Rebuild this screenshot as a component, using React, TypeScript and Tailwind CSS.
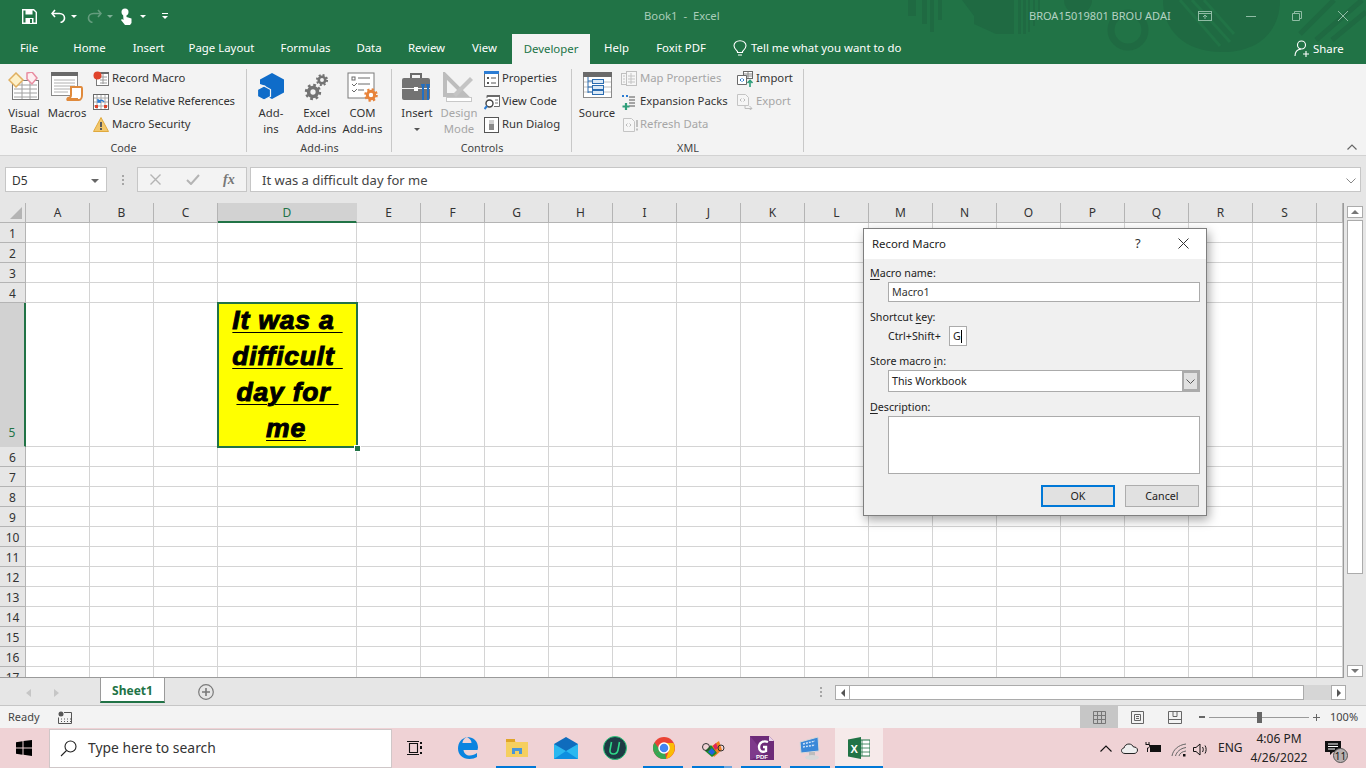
import React from "react";

const colLetters = ["A","B","C","D","E","F","G","H","I","J","K","L","M","N","O","P","Q","R","S","T"];
const rowNums = [1,2,3,4,5,6,7,8,9,10,11,12,13,14,15,16,17];

function Gear({ cx, cy, r, color }: { cx: number; cy: number; r: number; color: string }) {
  const c = 2 * Math.PI * r * 1.05;
  return (
    <g fill="none" stroke={color}>
      <circle cx={cx} cy={cy} r={r * 0.68} strokeWidth={r * 0.55} />
      <circle cx={cx} cy={cy} r={r * 1.05} strokeWidth={r * 0.42} strokeDasharray={`${c / 16} ${c / 16}`} />
    </g>
  );
}

const Svg = ({ w, h, children, className = "" }: { w: number; h: number; children: React.ReactNode; className?: string }) => (
  <svg width={w} height={h} viewBox={`0 0 ${w} ${h}`} className={`shrink-0 ${className}`}>{children}</svg>
);

function VisualBasicIcon() {
  return (
    <Svg w={32} h={28}>
      <rect x="4.5" y="8.5" width="26" height="19" fill="#fff" stroke="#7a7a7a" />
      <path d="M6 13h23M6 17h23M6 21h23M6 25h23M14 10v17M22 10v17" stroke="#a0a0a0" />
      <path d="M8 1l7 7-7 7-7-7z" fill="#fdf0c8" stroke="#e0b060" strokeWidth="1.5" />
      <path d="M19 1l5-1 5 6-5 6-5-5z" fill="#fdeef0" stroke="#e88ca0" strokeWidth="1.5" />
    </Svg>
  );
}
function MacrosIcon() {
  return (
    <Svg w={32} h={29}>
      <rect x="0.5" y="0.5" width="26" height="23" fill="#fff" stroke="#8a8a8a" />
      <rect x="0" y="0" width="27" height="4" fill="#6a6a6a" />
      <path d="M3 8h21M3 11h21M3 14h21M3 17h21M3 20h14" stroke="#b0b0b0" />
      <path d="M20 15h10c1 0 1 1 1 2v6c0 2-1 5-3 5H17c-1 0-1-1 0-2 2 0 3-1 3-3z" fill="#fff" stroke="#e08a3c" strokeWidth="2" />
      <rect x="16" y="26" width="11" height="3" fill="#e08a3c" />
    </Svg>
  );
}
function RecordIcon() {
  return (
    <Svg w={16} h={16}>
      <rect x="3.5" y="1.5" width="12" height="13" fill="#fff" stroke="#7a7a7a" />
      <path d="M7 6h7M7 9h7M7 12h7M10 3v10" stroke="#9a9a9a" />
      <rect x="8" y="1" width="8" height="2" fill="#6a6a6a" />
      <circle cx="4.5" cy="4.5" r="4" fill="#e0432b" />
    </Svg>
  );
}
function RelativeIcon() {
  return (
    <Svg w={16} h={16}>
      <rect x="0.5" y="0.5" width="15" height="15" fill="#fff" stroke="#6a6a6a" />
      <path d="M1 4h14M1 8h14M1 12h14M4 1v14M8 1v14M12 1v14" stroke="#a8a8a8" />
      <rect x="2" y="11" width="3" height="3" fill="#e0432b" />
      <rect x="11" y="11" width="3" height="3" fill="#e0432b" />
      <path d="M11 8a3.5 3.5 0 0 0-6 0M5 5v3h3" fill="none" stroke="#2b7cd3" strokeWidth="1.4" />
    </Svg>
  );
}
function SecurityIcon() {
  return (
    <Svg w={16} h={15}>
      <path d="M8 0.5l7.5 14H0.5z" fill="#f2c76c" stroke="#e0a93c" />
      <rect x="7" y="5" width="2" height="5" fill="#5a5a5a" />
      <rect x="7" y="11" width="2" height="2" fill="#5a5a5a" />
    </Svg>
  );
}
function AddinsIcon() {
  return (
    <Svg w={28} h={28}>
      <path d="M15 1l12 6.5v13L15 27 9 24V14L3 12V7.5z" fill="#0f6cc9" />
      <path d="M7 14l6.5 3.5v7L7 28 .5 24.5v-7z" fill="#0f6cc9" stroke="#f3f3f3" strokeWidth="1.2" />
    </Svg>
  );
}
function ExcelAddinsIcon() {
  return (
    <Svg w={28} h={30}>
      <Gear cx={19} cy={8} r={4.8} color="#737373" />
      <Gear cx={10} cy={20} r={6.5} color="#737373" />
    </Svg>
  );
}
function ComIcon() {
  return (
    <Svg w={32} h={30}>
      <rect x="1" y="1" width="26" height="25" fill="#fff" stroke="#7a7a7a" strokeWidth="1" />
      <rect x="5" y="5" width="3" height="3" fill="none" stroke="#6a6a6a" />
      <path d="M11 6h12M5 12l2 2 3-3M11 12h12M5 18l2 2 3-3M11 18h6" stroke="#6a6a6a" fill="none" />
      <Gear cx={24} cy={23} r={5.4} color="#e8833a" />
    </Svg>
  );
}
function InsertIcon() {
  return (
    <Svg w={30} h={32}>
      <path d="M9 6V2h10v4" fill="none" stroke="#6a6a6a" strokeWidth="2" />
      <rect x="0" y="6" width="28" height="22" rx="2" fill="#737373" />
      <rect x="0" y="16" width="28" height="1" fill="#f3f3f3" />
      <rect x="12" y="15" width="4" height="4" fill="#fff" />
      <path d="M20 14h2v14h-2zM25 14h2v14h-2z" fill="#1f6fc4" />
      <path d="M19 12l1 4h2l1-4zM24 12l1 4h2l1-4z" fill="#1f6fc4" />
    </Svg>
  );
}
function DesignIcon() {
  return (
    <Svg w={32} h={30}>
      <path d="M2 3v20h20z" fill="none" stroke="#bdbdbd" strokeWidth="4" />
      <path d="M10 22l17-17 3 3-17 17z" fill="#c4c4c4" />
      <rect x="3.5" y="25.5" width="25" height="4" fill="#fff" stroke="#c8c8c8" />
    </Svg>
  );
}
function PropertiesIcon() {
  return (
    <Svg w={15} h={16}>
      <rect x="0.5" y="0.5" width="14" height="15" fill="#fff" stroke="#6a6a6a" />
      <rect x="0" y="0" width="15" height="3" fill="#2b7cd3" />
      <rect x="3" y="6" width="2" height="2" fill="#555" />
      <rect x="3" y="11" width="2" height="2" fill="#555" />
      <path d="M7 7h5M7 12h5" stroke="#555" />
    </Svg>
  );
}
function ViewCodeIcon() {
  return (
    <Svg w={16} h={16}>
      <path d="M3 4V1.5h12.5v11H10" fill="#fff" stroke="#6a6a6a" />
      <rect x="3" y="1" width="13" height="2" fill="#6a6a6a" />
      <path d="M11 6h3M11 9h3" stroke="#777" />
      <circle cx="5.5" cy="9.5" r="3.5" fill="#fff" stroke="#444" strokeWidth="1.4" />
      <path d="M3 12l-2.5 3" stroke="#2b7cd3" strokeWidth="2" />
    </Svg>
  );
}
function RunDialogIcon() {
  return (
    <Svg w={15} h={16}>
      <rect x="0.5" y="0.5" width="14" height="15" fill="#fff" stroke="#555" strokeWidth="1" />
      <rect x="5" y="3" width="5" height="10" fill="#8a8a8a" />
      <rect x="5" y="3" width="5" height="4" fill="#d0d0d0" />
    </Svg>
  );
}
function SourceIcon() {
  return (
    <Svg w={29} h={26}>
      <rect x="0.5" y="0.5" width="28" height="25" fill="#fff" stroke="#8a8a8a" />
      <rect x="0" y="0" width="29" height="5" fill="#6a6a6a" />
      <path d="M1 10h27M1 15h27M1 20h27" stroke="#c0c0c0" />
      <path d="M5 5v16M5 9h4M5 15h4M5 20h4" stroke="#2b6cb0" fill="none" />
      <rect x="9.5" y="7.5" width="11" height="4" fill="#dbe9f6" stroke="#2b6cb0" />
      <rect x="9.5" y="13.5" width="11" height="4" fill="#dbe9f6" stroke="#2b6cb0" />
      <rect x="9.5" y="18.5" width="11" height="4" fill="#dbe9f6" stroke="#2b6cb0" />
    </Svg>
  );
}
function MapPropsIcon() {
  return (
    <Svg w={16} h={15}>
      <rect x="5.5" y="0.5" width="10" height="14" fill="#f6f6f6" stroke="#c0c0c0" />
      <rect x="0.5" y="2.5" width="5" height="11" fill="#f6f6f6" stroke="#c0c0c0" />
      <path d="M7 5h7M7 8h7M7 11h7M2 5h2M2 8h2M2 11h2M10 2v11" stroke="#c4c4c4" />
    </Svg>
  );
}
function ExpansionIcon() {
  return (
    <Svg w={16} h={16}>
      <path d="M8 3h6M8 6h6M8 9h6M8 12h6" stroke="#555" />
      <path d="M1 2h2M5 2h2" stroke="#2b7cd3" strokeWidth="2" />
      <path d="M5 9v7M1.500 12.500h7" stroke="#2e9e7a" strokeWidth="2.2" />
    </Svg>
  );
}
function RefreshIcon() {
  return (
    <Svg w={15} h={14} className="ml-[2px]">
      <path d="M0.500 0.500h8l3 3v10h-11z" fill="#f6f6f6" stroke="#c4c4c4" />
      <path d="M3 7l1.500-1.500M3 7l1.500 1.500M8 7L6.500 5.500M8 7L6.500 8.500" stroke="#bbb" />
      <rect x="13" y="2" width="2" height="7" fill="#c0c0c0" />
      <rect x="13" y="10.500" width="2" height="2" fill="#c0c0c0" />
    </Svg>
  );
}
function ImportIcon() {
  return (
    <Svg w={16} h={16}>
      <rect x="6.500" y="0.500" width="9" height="7" fill="#fff" stroke="#6a6a6a" />
      <path d="M7 3h8M7 5h8M11 1v6" stroke="#8a8a8a" />
      <path d="M0.500 4.500h9v9h-9z" fill="#fff" stroke="#6a6a6a" />
      <path d="M3 9l1.500-1.500M3 9l1.500 1.500M7 9L5.500 7.500M7 9l-1.500 1.500" stroke="#2b7cd3" />
      <path d="M13 16v-6M10.500 12l2.500-2.500 2.500 2.500" stroke="#2e9e7a" fill="none" strokeWidth="1.600" />
    </Svg>
  );
}
function ExportIcon() {
  return (
    <Svg w={16} h={16}>
      <path d="M0.500 0.500h8l3 3v8h-11z" fill="#f6f6f6" stroke="#c4c4c4" />
      <path d="M3 6l1.500-1.500M3 6l1.500 1.500M8 6L6.500 4.500M8 6L6.500 7.500" stroke="#bbb" />
      <path d="M8 12v2.500h7M12.500 12l2.500 2.500-2.500 1.500" stroke="#bdbdbd" fill="none" />
    </Svg>
  );
}

function BigBtn({ w, icon, lines, disabled }: { w: number; icon: React.ReactNode; lines: string[]; disabled?: boolean }) {
  return (
    <div className={`flex flex-col items-center ${disabled ? "text-[#a6a6a6]" : "text-[#333]"}`} style={{ width: w }}>
      <div className="flex h-[36px] items-start justify-center pt-[3px]">{icon}</div>
      <div className="text-center text-[11.3px] leading-[16px]">
        {lines.map((l) => (<div key={l} className="whitespace-nowrap">{l}</div>))}
      </div>
    </div>
  );
}

function SmallBtn({ icon, label, disabled, textW = 19, tight }: { icon: React.ReactNode; label: string; disabled?: boolean; textW?: number; tight?: boolean }) {
  return (
    <div className={`flex h-[23px] items-center text-[11.3px] whitespace-nowrap ${disabled ? "text-[#a6a6a6]" : "text-[#333]"} ${tight ? "tracking-[-0.15px]" : ""}`}>
      <div className="flex items-center justify-start" style={{ width: textW }}>{icon}</div>
      <span>{label}</span>
    </div>
  );
}

function Group({ width, label, children }: { width: number; label: string; children: React.ReactNode }) {
  return (
    <div className="relative flex h-[87px] shrink-0 flex-col" style={{ width }}>
      <div className="flex h-[72px] items-start">{children}</div>
      <div className="text-center text-[10.8px] leading-[14px] text-[#444]">{label}</div>
      <div className="absolute right-0 top-0 h-[83px] w-px bg-[#c8c8c8]" />
    </div>
  );
}

function TitleDecor() {
  const c = "#1f6a42";
  return (
    <svg width="466" height="54" viewBox="0 0 466 54" className="absolute right-0 top-0" fill={c}>
      <rect x="8" y="0" width="8" height="16" />
      <rect x="22" y="0" width="5" height="24" />
      <rect x="30" y="0" width="4" height="32" />
      <rect x="38" y="0" width="4" height="20" />
      <path d="M62 0l12 16V0zM74 0h40v34H96L74 24z" />
      <path d="M100 0h2v34h-2zM118 0h3v34h-3zM123 0h3v34h-3zM128 0h2v32h-2zM133 0h2v26h-2zM138 0h2v18h-2z" />
      <circle cx="178" cy="0" r="14" />
      <circle cx="228" cy="30" r="17" fill="none" stroke={c} strokeWidth="7" />
      <path d="M263 0h117c0 30-20 52-58 52s-59-22-59-52z" />
      <path d="M280 0l40 46M292 0l38 42M304 0l30 34" stroke="#217346" strokeWidth="3" fill="none" />
      <path d="M400 34L434 0M416 40L462 0M432 40L466 12" stroke={c} strokeWidth="5" fill="none" />
    </svg>
  );
}

function TitleBar() {
  return (
    <div className="relative z-10 flex h-[32px] items-center">
      <div className="relative flex w-full items-center text-white">
        <div className="ml-[22px]">
          <Svg w={15} h={15}>
            <path d="M0.700 0.700h11l2.600 2.600v11H.7z" fill="none" stroke="#fff" strokeWidth="1.400" />
            <rect x="3.500" y="1" width="7" height="4.500" fill="#fff" />
            <rect x="3.500" y="9" width="8" height="5.500" fill="#fff" />
            <rect x="8" y="10" width="2" height="4" fill="#217346" />
          </Svg>
        </div>
        <div className="ml-[14px]">
          <Svg w={15} h={14}>
            <path d="M4 1L1 4.500 4 8" fill="none" stroke="#fff" strokeWidth="1.600" />
            <path d="M1.500 4.500h7c3 0 5 2 5 4.500s-2 4-4 4.500" fill="none" stroke="#fff" strokeWidth="1.600" />
          </Svg>
        </div>
        <div className="ml-[5px] h-0 w-0 border-x-[3px] border-t-[3px] border-x-transparent border-t-white" />
        <div className="ml-[10px] opacity-30">
          <Svg w={15} h={14}>
            <path d="M11 1l3 3.500L11 8" fill="none" stroke="#fff" strokeWidth="1.600" />
            <path d="M13.500 4.500h-7c-3 0-5 2-5 4.500s2 4 4 4.500" fill="none" stroke="#fff" strokeWidth="1.600" />
          </Svg>
        </div>
        <div className="ml-[5px] h-0 w-0 border-x-[3px] border-t-[3px] border-x-transparent border-t-[#7fb096]" />
        <div className="ml-[7px]">
          <Svg w={13} h={17}>
            <circle cx="5" cy="4" r="3.500" fill="#fff" />
            <path d="M3 5h3.500v4l5 1.500V15l-1.500 2H5l-4-5 1-1 1.500 1z" fill="#fff" />
          </Svg>
        </div>
        <div className="ml-[7px] h-0 w-0 border-x-[3px] border-t-[3px] border-x-transparent border-t-white" />
        <div className="ml-[16px] flex flex-col items-center gap-[2px]">
          <div className="h-px w-[6px] bg-white" />
          <div className="h-0 w-0 border-x-[3px] border-t-[3px] border-x-transparent border-t-white" />
        </div>
        <div className="absolute left-[644px] top-[-1px] whitespace-pre text-[11.3px] leading-[18px] text-[#a9cdb9]">Book1  -  Excel</div>
        <div className="absolute left-[1029px] top-[-1px] whitespace-nowrap text-[11px] leading-[18px] text-[#b4d2c2]">BROA15019801 BROU ADAI</div>
        <div className="absolute left-[1198px] top-[3px]">
          <Svg w={14} h={10}>
            <rect x="0.500" y="0.500" width="13" height="9" fill="none" stroke="#8fbca4" />
            <path d="M1 2.500h12M7 8V4M5 6l2-2 2 2" stroke="#8fbca4" fill="none" />
          </Svg>
        </div>
        <div className="absolute left-[1246px] top-[8px] h-px w-[10px] bg-[#8fbca4]" />
        <div className="absolute left-[1292px] top-[3px]">
          <Svg w={10} h={10}>
            <path d="M2.500 2.500V.5h7v7h-2M.5 2.500h7v7h-7z" fill="none" stroke="#8fbca4" />
          </Svg>
        </div>
        <div className="absolute left-[1338px] top-[3px]">
          <Svg w={10} h={10}>
            <path d="M0 0l10 10M10 0L0 10" stroke="#8fbca4" />
          </Svg>
        </div>
      </div>
    </div>
  );
}

function Tab({ w, label }: { w: number; label: string }) {
  return <div className="flex h-full shrink-0 items-center justify-center text-[11.4px] text-white" style={{ width: w }}>{label}</div>;
}

function TabBar() {
  return (
    <div className="relative z-10 flex h-[32px] items-center">
      <Tab w={58} label="File" />
      <Tab w={63} label="Home" />
      <Tab w={55} label="Insert" />
      <Tab w={91} label="Page Layout" />
      <Tab w={77} label="Formulas" />
      <Tab w={50} label="Data" />
      <Tab w={65} label="Review" />
      <Tab w={51} label="View" />
      <div className="ml-[2px] flex h-[30px] w-[78px] shrink-0 items-center justify-center self-end bg-[#f3f3f3] text-[11.4px] text-[#217346]">Developer</div>
      <Tab w={53} label="Help" />
      <Tab w={76} label="Foxit PDF" />
      <div className="ml-[14px] flex items-center text-[11.4px] text-white">
        <Svg w={14} h={16} className="mr-[4px]">
          <path d="M4.500 11.500C3 10 1 8.500 1 5.800 1 3 3.500 .7 7 .7s6 2.300 6 5.100c0 2.700-2 4.200-3.500 5.700v1h-5zM5 15h4" fill="none" stroke="#fff" strokeWidth="1.100" />
        </Svg>
        <span className="whitespace-nowrap">Tell me what you want to do</span>
      </div>
      <div className="absolute left-[1294px] top-[8px] flex items-center text-[11.4px] text-white">
        <Svg w={17} h={17} className="mr-[2px]">
          <circle cx="7.500" cy="5" r="4" fill="none" stroke="#fff" strokeWidth="1.100" />
          <path d="M1 16c0-4 2.500-6.500 6-7M12 11v6M9 14h6" fill="none" stroke="#fff" strokeWidth="1.100" />
        </Svg>
        <span>Share</span>
      </div>
    </div>
  );
}

function Ribbon() {
  return (
    <div className="relative flex h-[92px] border-b border-[#d2d2d2] bg-[#f3f3f3] pt-[5px]">
      <Group width={247} label="Code">
        <div className="ml-[5px]"><BigBtn w={38} icon={<VisualBasicIcon />} lines={["Visual", "Basic"]} /></div>
        <BigBtn w={48} icon={<MacrosIcon />} lines={["Macros"]} />
        <div className="ml-[2px] -mt-[2px] flex flex-col">
          <SmallBtn icon={<RecordIcon />} label="Record Macro" />
          <SmallBtn icon={<RelativeIcon />} label="Use Relative References" tight />
          <SmallBtn icon={<SecurityIcon />} label="Macro Security" />
        </div>
      </Group>
      <Group width={145} label="Add-ins">
        <div className="ml-[2px]"><BigBtn w={44} icon={<AddinsIcon />} lines={["Add-", "ins"]} /></div>
        <BigBtn w={47} icon={<ExcelAddinsIcon />} lines={["Excel", "Add-ins"]} />
        <BigBtn w={45} icon={<ComIcon />} lines={["COM", "Add-ins"]} />
      </Group>
      <Group width={180} label="Controls">
        <div className="ml-[5px] flex w-[40px] flex-col items-center">
          <BigBtn w={40} icon={<InsertIcon />} lines={["Insert"]} />
          <div className="mt-[7px] h-0 w-0 border-x-[3px] border-t-[3px] border-x-transparent border-t-[#555]" />
        </div>
        <div className="ml-[1px]"><BigBtn w={42} icon={<DesignIcon />} lines={["Design", "Mode"]} disabled /></div>
        <div className="ml-[4px] -mt-[2px] flex flex-col">
          <SmallBtn icon={<PropertiesIcon />} label="Properties" textW={18} />
          <SmallBtn icon={<ViewCodeIcon />} label="View Code" textW={18} />
          <SmallBtn icon={<RunDialogIcon />} label="Run Dialog" textW={18} />
        </div>
      </Group>
      <Group width={232} label="XML">
        <div className="ml-[4px]"><BigBtn w={42} icon={<SourceIcon />} lines={["Source"]} /></div>
        <div className="ml-[3px] -mt-[2px] flex w-[116px] flex-col">
          <SmallBtn icon={<MapPropsIcon />} label="Map Properties" disabled />
          <SmallBtn icon={<ExpansionIcon />} label="Expansion Packs" />
          <SmallBtn icon={<RefreshIcon />} label="Refresh Data" disabled />
        </div>
        <div className="-mt-[2px] flex flex-col">
          <SmallBtn icon={<ImportIcon />} label="Import" />
          <SmallBtn icon={<ExportIcon />} label="Export" disabled />
        </div>
      </Group>
      <div className="absolute bottom-[5px] right-[9px]">
        <Svg w={10} h={6}><path d="M.5 5.500L5 1l4.500 4.500" fill="none" stroke="#666" strokeWidth="1.200" /></Svg>
      </div>
    </div>
  );
}

function FormulaBar() {
  return (
    <div className="flex h-[47px] items-center bg-[#e6e6e6] pl-[5px] pr-[5px]">
      <div className="flex h-[25px] w-[102px] shrink-0 items-center justify-between border border-[#c6c6c6] bg-white pl-[6px] pr-[7px] pt-[2px] text-[12px] text-[#333]">
        <span>D5</span>
        <div className="h-0 w-0 border-x-[4px] border-t-[4px] border-x-transparent border-t-[#666]" />
      </div>
      <div className="ml-[15px] flex w-[3px] flex-col gap-[2px]">
        <div className="h-[2px] w-[2px] bg-[#a6a6a6]" />
        <div className="h-[2px] w-[2px] bg-[#a6a6a6]" />
        <div className="h-[2px] w-[2px] bg-[#a6a6a6]" />
      </div>
      <div className="ml-[12px] flex h-[25px] w-[110px] shrink-0 items-center border border-[#c6c6c6] bg-[#f3f3f3] text-[#a6a6a6]">
        <Svg w={11} h={11} className="ml-[12px]"><path d="M.5.5l10 10M10.500.5l-10 10" stroke="#b4b4b4" strokeWidth="1.400" /></Svg>
        <Svg w={14} h={11} className="ml-[25px]"><path d="M1 6l4 4 8-9" stroke="#b4b4b4" strokeWidth="2" fill="none" /></Svg>
        <span className="ml-[23px] text-[14px] font-bold italic text-[#777] [font-family:Liberation_Serif,serif]">fx</span>
      </div>
      <div className="ml-[3px] flex h-[25px] min-w-0 flex-1 items-center justify-between border border-[#c6c6c6] bg-white pl-[11px] pr-[4px] pt-[2px] text-[13px] text-[#444]">
        <span>It was a difficult day for me</span>
        <Svg w={10} h={6}><path d="M.5.500L5 5l4.500-4.500" fill="none" stroke="#888" /></Svg>
      </div>
    </div>
  );
}

function ColHeader({ label }: { label: string }) {
  const active = label === "D";
  const w = label === "D" ? "w-[139px]" : label === "T" ? "flex-1" : "w-[64px]";
  return (
    <div className={`flex h-full shrink-0 items-center justify-center border-r text-[12px] ${w} ${active ? "border-[#d2d2d2] border-b-2 border-b-[#217346] bg-[#d2d2d2] pt-[1px] text-[#217346]" : "border-[#b4b4b4] border-b border-b-[#b4b4b4] text-[#333]"}`}>
      {label === "T" ? "" : label}
    </div>
  );
}

function D5Cell() {
  return (
    <div className="relative h-full w-[139px] shrink-0 bg-[#ffff00]">
      <div className="absolute left-[-1px] top-[-1px] z-10 h-[146px] w-[141px] border-2 border-[#217346]" />
      <div className="absolute bottom-[-5px] right-[-4px] z-20 h-[7px] w-[7px] border border-white bg-[#217346]" />
      <div className="-mt-[1px] flex h-full flex-col items-center text-center [font-family:Liberation_Sans,Arial,sans-serif] text-[26.5px] font-bold italic leading-[36px] tracking-[0.8px] text-black underline [-webkit-text-stroke:1px_#000] [text-decoration-thickness:1.3px] [text-underline-offset:3px] decoration-black">
        <div className="whitespace-pre">It was a </div>
        <div className="whitespace-pre">difficult </div>
        <div className="whitespace-pre">day for </div>
        <div className="mr-[3px] whitespace-pre">me</div>
      </div>
    </div>
  );
}

function GridRow({ n }: { n: number }) {
  const big = n === 5;
  return (
    <div className={`flex shrink-0 ${big ? "h-[144px]" : "h-[20px]"}`}>
      <div className={`flex w-[26px] shrink-0 justify-center border-b border-r text-[12px] ${big ? "items-end border-b-[#d2d2d2] border-r-2 border-r-[#217346] bg-[#d2d2d2] pb-[4px] text-[#217346]" : "items-center border-[#b4b4b4] bg-[#e6e6e6] pt-[2px] text-[#333]"}`}>
        {n}
      </div>
      {colLetters.map((c) => {
        if (big && c === "D") return <D5Cell key={c} />;
        const w = c === "D" ? "w-[139px]" : c === "T" ? "flex-1" : "w-[64px]";
        return <div key={c} className={`h-full shrink-0 border-b border-r border-[#d4d4d4] bg-white ${w}`} />;
      })}
    </div>
  );
}

function VScroll() {
  return (
    <div className="flex w-[22px] shrink-0 flex-col items-center bg-[#e6e6e6] pr-[1px] pt-[3px]">
      <div className="flex h-[12px] w-[16px] items-center justify-center border border-[#ababab] bg-white">
        <div className="h-0 w-0 border-x-[4px] border-b-[4px] border-x-transparent border-b-[#777]" />
      </div>
      <div className="mt-[2px] h-[354px] w-[16px] border border-[#ababab] bg-white" />
      <div className="flex-1" />
      <div className="mb-[1px] flex h-[12px] w-[16px] items-center justify-center border border-[#ababab] bg-white">
        <div className="h-0 w-0 border-x-[4px] border-t-[4px] border-x-transparent border-t-[#777]" />
      </div>
    </div>
  );
}

function Sheet() {
  return (
    <div className="flex h-[475px] overflow-hidden">
      <div className="flex min-w-0 flex-1 flex-col overflow-hidden border-b border-r border-[#9a9a9a]">
        <div className="flex h-[20px] shrink-0 bg-[#e6e6e6]">
          <div className="relative h-full w-[26px] shrink-0 border-b border-r border-[#b4b4b4]">
            <div className="absolute bottom-[3px] right-[3px] h-0 w-0 border-b-[12px] border-l-[12px] border-b-[#b4b4b4] border-l-transparent" />
          </div>
          {colLetters.map((c) => <ColHeader key={c} label={c} />)}
        </div>
        {rowNums.map((n) => <GridRow key={n} n={n} />)}
      </div>
      <VScroll />
    </div>
  );
}

function SheetTabs() {
  return (
    <div className="flex h-[28px] items-start border-b border-[#c6c6c6] bg-[#e6e6e6]">
      <div className="ml-[26px] mt-[11px] h-0 w-0 border-y-[4px] border-r-[5px] border-y-transparent border-r-[#c6c6c6]" />
      <div className="ml-[23px] mt-[11px] h-0 w-0 border-y-[4px] border-l-[5px] border-y-transparent border-l-[#c6c6c6]" />
      <div className="ml-[41px] flex h-[25px] w-[65px] items-center justify-center border-x border-b-2 border-x-[#9a9a9a] border-b-[#217346] bg-white pt-[2px] text-[12px] font-bold text-[#217346]">Sheet1</div>
      <div className="ml-[33px] mt-[6px]">
        <Svg w={16} h={16}>
          <circle cx="8" cy="8" r="7.300" fill="none" stroke="#7a7a7a" strokeWidth="1.200" />
          <path d="M4 8h8M8 4v8" stroke="#7a7a7a" strokeWidth="1.600" />
        </Svg>
      </div>
      <div className="ml-[606px] mt-[9px] flex flex-col gap-[2px]">
        <div className="h-[2px] w-[2px] bg-[#a6a6a6]" />
        <div className="h-[2px] w-[2px] bg-[#a6a6a6]" />
        <div className="h-[2px] w-[2px] bg-[#a6a6a6]" />
      </div>
      <div className="ml-[13px] mt-[7px] flex h-[15px] w-[511px] bg-[#d6d6d6]">
        <div className="flex h-full w-[15px] items-center justify-center border border-[#ababab] bg-white">
          <div className="h-0 w-0 border-y-[4px] border-r-[4px] border-y-transparent border-r-[#555]" />
        </div>
        <div className="h-full w-[454px] border-y border-r border-[#ababab] bg-white" />
        <div className="flex-1" />
        <div className="ml-auto flex h-full w-[15px] items-center justify-center border border-[#ababab] bg-white">
          <div className="h-0 w-0 border-y-[4px] border-l-[4px] border-y-transparent border-l-[#555]" />
        </div>
      </div>
    </div>
  );
}

function StatusBar() {
  return (
    <div className="relative flex h-[22px] items-center bg-[#f3f3f3] text-[11px] text-[#444]">
      <span className="ml-[8px]">Ready</span>
      <div className="ml-[18px]">
        <Svg w={14} h={13}>
          <circle cx="3" cy="3" r="2.500" fill="#555" />
          <path d="M6 1.500h7.500v11H.5V6.500" fill="none" stroke="#555" />
          <path d="M3 8h1M6 8h1M9 8h1M12 8h1M3 10.500h1M6 10.500h1M9 10.500h1M12 10.500h1" stroke="#555" />
        </Svg>
      </div>
      <div className="ml-auto flex h-full items-center">
        <div className="flex h-full w-[38px] items-center justify-center bg-[#c6c6c6]">
          <Svg w={13} h={13}><path d="M.5.500h12v12H.5zM4.500.5v12M8.500.5v12M.5 4.500h12M.5 8.500h12" fill="none" stroke="#777" /></Svg>
        </div>
        <div className="flex h-full w-[38px] items-center justify-center">
          <Svg w={13} h={13}><path d="M.5.500h12v12H.5zM3.500 3.500h6v6h-6zM5 5.500h3M5 7.500h3" fill="none" stroke="#666" /></Svg>
        </div>
        <div className="flex h-full w-[38px] items-center justify-center">
          <Svg w={14} h={13}><path d="M.5.500h13v12H.5zM.5 8.500h13M5 .5v5h4v-5" fill="none" stroke="#666" /></Svg>
        </div>
        <div className="ml-[5px] h-[2px] w-[6px] bg-[#666]" />
        <div className="relative ml-[4px] h-px w-[100px] bg-[#9a9a9a]">
          <div className="absolute left-[48px] top-[-5px] h-[11px] w-[5px] bg-[#666]" />
        </div>
        <div className="relative ml-[4px] h-[7px] w-[7px]">
          <div className="absolute left-0 top-[3px] h-px w-[7px] bg-[#666]" />
          <div className="absolute left-[3px] top-0 h-[7px] w-px bg-[#666]" />
        </div>
        <span className="ml-[10px] mr-[8px] w-[28px] text-right">100%</span>
      </div>
    </div>
  );
}

function UL({ children }: { children: string }) {
  return <span className="underline underline-offset-2">{children}</span>;
}

function Dialog() {
  return (
    <div className="absolute left-[863px] top-[228px] z-30 flex h-[288px] w-[344px] flex-col border border-[#7f7f7f] bg-[#f0f0f0] text-[10.7px] text-[#222] shadow-[2px_4px_10px_rgba(0,0,0,0.35)]">
      <div className="relative flex h-[30px] shrink-0 items-center bg-white pl-[8px] text-[11.4px]">
        <span>Record Macro</span>
        <span className="absolute left-[271px] top-[5px] text-[13px] text-[#333]">?</span>
        <Svg w={11} h={11} className="absolute left-[314px] top-[9px]"><path d="M.5.500l10 10M10.500.5l-10 10" stroke="#333" /></Svg>
      </div>
      <div className="flex flex-1 flex-col px-[6px]">
        <div className="mt-[6px] h-[16px] leading-[16px]"><UL>M</UL>acro name:</div>
        <div className="ml-[18px] mt-[1px] flex h-[20px] w-[312px] items-center border border-[#ababab] bg-white pl-[3px] text-[#333]">Macro1</div>
        <div className="mt-[7px] h-[16px] leading-[16px]">Shortcut <UL>k</UL>ey:</div>
        <div className="ml-[18px] mt-[1px] flex h-[20px] items-center">
          <span className="w-[61px]">Ctrl+Shift+</span>
          <div className="flex h-[20px] w-[18px] items-center border border-[#ababab] bg-white pl-[3px]">G<div className="h-[13px] w-px bg-black" /></div>
        </div>
        <div className="mt-[7px] h-[16px] leading-[16px]">Store macro <UL>i</UL>n:</div>
        <div className="ml-[18px] mt-[1px] flex h-[22px] w-[312px] items-center border border-[#ababab] bg-white pl-[3px]">
          <span>This Workbook</span>
          <div className="ml-auto flex h-full w-[17px] items-center justify-center border-2 border-[#ababab] bg-[#e1e1e1]">
            <Svg w={9} h={5}><path d="M.5.500L4.500 4.500 8.500.5" fill="none" stroke="#555" /></Svg>
          </div>
        </div>
        <div className="mt-[7px] h-[16px] leading-[16px]"><UL>D</UL>escription:</div>
        <div className="ml-[18px] mt-[1px] h-[58px] w-[312px] border border-[#ababab] bg-white" />
        <div className="ml-[171px] mt-[11px] flex gap-[10px]">
          <div className="flex h-[22px] w-[74px] items-center justify-center border-2 border-[#0078d7] bg-[#e1e1e1]">OK</div>
          <div className="flex h-[22px] w-[74px] items-center justify-center border border-[#adadad] bg-[#e1e1e1]">Cancel</div>
        </div>
      </div>
    </div>
  );
}

function TaskSlot({ w, icon, bar, active, partial }: { w: number; icon: React.ReactNode; bar?: boolean; active?: boolean; partial?: boolean }) {
  return (
    <div className={`relative flex h-full shrink-0 items-center justify-center ${active ? "bg-[#f6eaea]" : ""}`} style={{ width: w }}>
      {icon}
      {bar && <div className={`absolute bottom-0 h-[2px] bg-[#0078d7] ${active ? "left-0 right-0" : "left-[4px] right-[5px]"}`} />}
      {partial && <div className="absolute bottom-0 right-[5px] h-[2px] w-[8px] bg-[#6aa6e0]" />}
    </div>
  );
}

function Taskbar() {
  return (
    <div className="flex h-[40px] items-center bg-[#efd2d5] text-[#111]">
      <div className="ml-[16px]">
        <Svg w={16} h={16}>
          <path d="M0 2.200L6.500 1.300V7.500H0zM7.500 1.100L16 0v7.500H7.500zM0 8.500h6.500v6.200L0 13.800zM7.500 8.500H16V16l-8.500-1.200z" fill="#000" />
        </Svg>
      </div>
      <div className="ml-[17px] flex h-[39px] w-[343px] shrink-0 items-center border border-[#cfc7c8] bg-white">
        <Svg w={17} h={17} className="ml-[10px]">
          <circle cx="10.500" cy="6.500" r="5.500" fill="none" stroke="#222" strokeWidth="1.100" />
          <path d="M6.500 10.500L1 16" stroke="#222" strokeWidth="1.100" />
        </Svg>
        <span className="ml-[11px] text-[13.9px] text-[#333]">Type here to search</span>
      </div>
      <div className="ml-[15px]">
        <Svg w={16} h={16}>
          <path d="M2.500 3.500h8v9h-8zM0 1.500h12M0 14.500h12" fill="none" stroke="#111" strokeWidth="1.100" />
          <rect x="13" y="2" width="2" height="2" fill="#111" />
          <rect x="13" y="6" width="2" height="3" fill="#111" />
          <rect x="13" y="12" width="2" height="2" fill="#111" />
        </Svg>
      </div>
      <div className="ml-[20px] flex h-full">
        <TaskSlot w={49} icon={
          <Svg w={20} h={22}>
            <path d="M19.500 13H5.500c.3 3.500 3 5.500 6.300 5.500 2.700 0 5.200-1 7.200-2.400v4C17 21.300 14.300 22 11.500 22 4.500 22 0 17.500 0 11.500 0 6 3 1.500 9 0 5.500 1.500 4.500 4.500 4.500 6h9c0-3-2-4.500-4.500-6 6 0 11 4 11 10.500z" fill="#0a84e0" />
          </Svg>} />
        <TaskSlot w={49} bar icon={
          <Svg w={22} h={18}>
            <path d="M0 1h8l2 2h12v15H0z" fill="#f5cf5f" />
            <rect x="0" y="0" width="9" height="3" fill="#e0a526" />
            <rect x="6" y="9" width="10" height="6" fill="#4a96d8" />
            <rect x="9" y="12" width="4" height="6" fill="#f5cf5f" />
          </Svg>} />
        <TaskSlot w={49} icon={
          <Svg w={24} h={22}>
            <path d="M0 7L12 0l12 7v15H0z" fill="#0f6cbd" />
            <path d="M12 14L24 7v15H0V7z" fill="#2bb8f0" />
            <path d="M0 22l12-8 12 8z" fill="#0e8fe0" />
          </Svg>} />
        <TaskSlot w={49} icon={
          <Svg w={24} h={24}>
            <circle cx="12" cy="12" r="11.500" fill="#1d3b44" stroke="#27c77a" strokeWidth="1" />
            <path d="M8.500 6l-1.500 8c-.4 2.500 1 4 3.500 4s4-1.500 4.500-4l1.500-8" fill="none" stroke="#2fd98a" strokeWidth="1.600" />
          </Svg>} />
        <TaskSlot w={49} bar icon={
          <Svg w={22} h={22}>
            <circle cx="11" cy="11" r="11" fill="#ea4335" />
            <path d="M11 11L1.500 16.500A11 11 0 0 0 11 22c1 0 1.500 0 2.200-.3z" fill="#34a853" />
            <path d="M1.500 5.500A11 11 0 0 0 1.500 16.500L7 13z" fill="#34a853" />
            <path d="M11 6h9.500A11 11 0 0 1 13 21.800L16 13z" fill="#fbbc05" />
            <circle cx="11" cy="11" r="5" fill="#4285f4" stroke="#fff" strokeWidth="1.500" />
          </Svg>} />
        <TaskSlot w={49} bar partial icon={
          <Svg w={24} h={20}>
            <path d="M8 10L18 3l3 9-8 7z" fill="#f08020" />
            <path d="M4 13l6-6 6 8-5 4z" fill="#1a8a2a" />
            <path d="M7 14l4-4 3 4-3 3z" fill="#2060e0" />
            <path d="M12 8l3-3 2 5-3 2z" fill="#e02060" />
            <circle cx="5" cy="9" r="3.500" fill="none" stroke="#333" />
            <circle cx="20" cy="10" r="3" fill="none" stroke="#333" />
          </Svg>} />
        <TaskSlot w={49} bar icon={
          <Svg w={24} h={24}>
            <path d="M0 0h19l5 5v19H0z" fill="#6d2b78" />
            <path d="M19 0l5 5h-5z" fill="#e8d4ea" />
            <path d="M0 0l14 17-14 7z" fill="#7e3a8b" />
            <path d="M18 6c-5-2-9 1-9 5s3 6 7 4v-4h-3" fill="none" stroke="#fff" strokeWidth="2.400" />
            <text x="6" y="23" fontSize="6" fontWeight="700" fill="#fff" fontFamily="Liberation Sans, sans-serif">PDF</text>
          </Svg>} />
        <TaskSlot w={49} bar icon={
          <Svg w={24} h={24}>
            <path d="M1 6L19 1l1 14-18 2z" fill="#3a88d8" stroke="#d8d8d8" />
            <path d="M4 8l12-3M4 11l12-2" stroke="#cfe4f8" strokeWidth="1.400" strokeDasharray="2 1" />
            <rect x="10" y="16" width="6" height="4" fill="#bdbdbd" />
            <ellipse cx="13" cy="21.500" rx="7" ry="2.500" fill="#d8d8d8" />
          </Svg>} />
        <TaskSlot w={48} bar active icon={
          <Svg w={22} h={22}>
            <rect x="9" y="3" width="13" height="16" fill="#fff" stroke="#217346" />
            <path d="M14 3v16M9 7h13M9 11h13M9 15h13" stroke="#217346" strokeWidth="0.800" />
            <path d="M0 2.500L13 0v22L0 19.500z" fill="#217346" />
            <text x="2.500" y="15.500" fontSize="11" fontWeight="700" fill="#fff" fontFamily="Liberation Sans, sans-serif">X</text>
          </Svg>} />
      </div>
      <div className="relative ml-auto h-full w-[270px] text-[#222]">
        <Svg w={12} h={7} className="absolute left-[4px] top-[17px]"><path d="M.5 6.500L6 1l5.500 5.500" fill="none" stroke="#111" strokeWidth="1.100" /></Svg>
        <Svg w={17} h={11} className="absolute left-[25px] top-[15px]"><path d="M4 10.500C1.500 10.500.5 9 .5 7.500S2 5 3 5c.5-2.500 2.500-4 5-4 2 0 4 1.500 4.500 3 2-.2 4 1 4 3s-1.500 3.500-3.500 3.500z" fill="#eee" stroke="#222" /></Svg>
        <Svg w={16} h={11} className="absolute left-[49px] top-[14px]">
          <rect x="5.500" y="3.500" width="10" height="6" fill="#111" stroke="#111" />
          <path d="M1 0v2M4 0v2M.5 2.500h4v2c0 1-1 1.500-2 1.500v4" fill="none" stroke="#111" />
        </Svg>
        <Svg w={16} h={14} className="absolute left-[75px] top-[15px]">
          <path d="M1 13C2 7 7 2 15 1M4.500 13C5.500 9 9 5.500 15 4.500M8 13c.5-2.500 3-4.500 7-5" fill="none" stroke="#666" />
          <rect x="12" y="11" width="2.500" height="2.500" fill="#111" />
        </Svg>
        <Svg w={16} h={13} className="absolute left-[97px] top-[15px]">
          <path d="M.5 4.500h2.500L7 1v11L3 8.500H.5z" fill="none" stroke="#111" />
          <path d="M9.500 4c1 1.500 1 3.500 0 5M12 2.500c1.500 2.500 1.500 5.500 0 8" fill="none" stroke="#111" />
        </Svg>
        <span className="absolute left-[122px] top-[12px] text-[12px] leading-[16px]">ENG</span>
        <div className="absolute left-[150px] top-[1px] w-[66px] text-center text-[12px] leading-[19px]">
          <div>4:06 PM</div>
          <div>4/26/2022</div>
        </div>
        <Svg w={16} h={14} className="absolute left-[229px] top-[13px]">
          <path d="M0 0h16v11H8l-3 3v-3H0z" fill="#111" />
          <path d="M3 3h10M3 5.500h10M3 8h7" stroke="#fff" />
        </Svg>
        <div className="absolute left-[237px] top-[20px] flex h-[15px] w-[15px] items-center justify-center rounded-full border border-[#555] bg-[#b8b0b0] text-[10px] leading-none text-[#111]">11</div>
      </div>
    </div>
  );
}

export default function App() {
  return (
    <div className="relative h-[768px] w-[1366px] overflow-hidden bg-white [font-family:Noto_Sans,sans-serif]">
      <div className="relative h-[64px] bg-[#217346]">
        <TitleDecor />
        <TitleBar />
        <TabBar />
      </div>
      <Ribbon />
      <FormulaBar />
      <Sheet />
      <SheetTabs />
      <StatusBar />
      <Taskbar />
      <Dialog />
    </div>
  );
}
